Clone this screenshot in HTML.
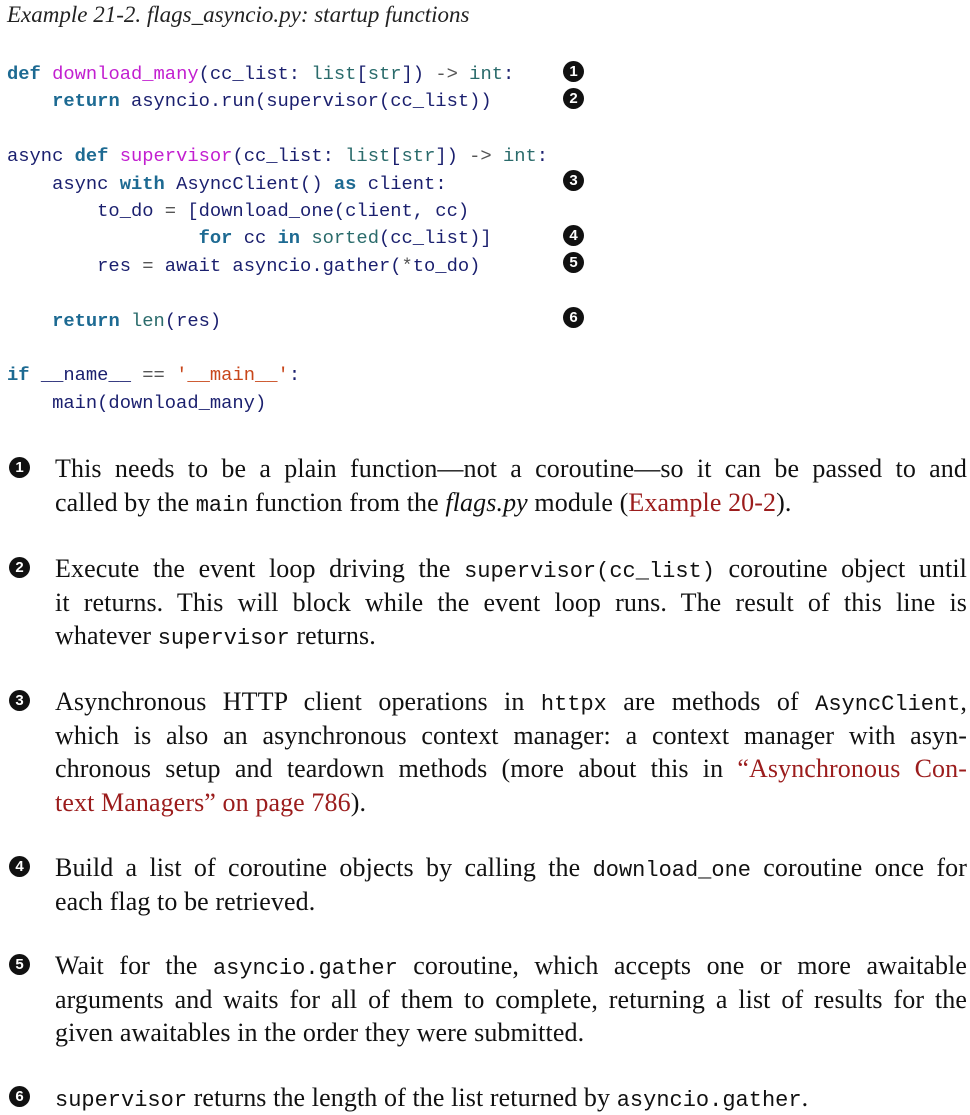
<!DOCTYPE html>
<html><head><meta charset="utf-8"><style>
body{margin:0;background:#fff;width:970px;height:1114px;position:relative;overflow:hidden;color:#111}
.t{position:absolute;left:7px;top:2px;font:italic 23px "Liberation Serif",serif;color:#222}
pre{position:absolute;left:7px;top:61px;margin:0;font:18.8px/27.4px "Liberation Mono",monospace;color:#1a1f6e}
.k{color:#1d6a92;font-weight:bold}.f{color:#c21fd0}.b{color:#2a6b6b}.s{color:#c8461a}.o{color:#555}
.c{display:inline-block;width:21px;height:21px;border-radius:50%;background:#111;color:#fff;font:bold 15px/21px "Liberation Sans",sans-serif;text-align:center;vertical-align:middle}
.cc{position:absolute;left:563px}
.p{position:absolute;left:55px;width:912px;font:26px/33.6px "Liberation Serif",serif;letter-spacing:0.1px;color:#111}
.p div{text-align:justify;text-align-last:justify;height:33.6px}
.p div.l{text-align-last:left}
.p code{font:22px "Liberation Mono",monospace;letter-spacing:0}
.pc{position:absolute;left:9px}
a{color:#9b1c1c;text-decoration:none}
</style></head><body>
<div class="t">Example 21-2. flags_asyncio.py: startup functions</div>
<pre><span class="k">def</span> <span class="f">download_many</span>(cc_list: <span class="b">list</span>[<span class="b">str</span>]) <span class="o">-&gt;</span> <span class="b">int</span>:
    <span class="k">return</span> asyncio.run(supervisor(cc_list))

async <span class="k">def</span> <span class="f">supervisor</span>(cc_list: <span class="b">list</span>[<span class="b">str</span>]) <span class="o">-&gt;</span> <span class="b">int</span>:
    async <span class="k">with</span> AsyncClient() <span class="k">as</span> client:
        to_do <span class="o">=</span> [download_one(client, cc)
                 <span class="k">for</span> cc <span class="k">in</span> <span class="b">sorted</span>(cc_list)]
        res <span class="o">=</span> await asyncio.gather(<span class="o">*</span>to_do)

    <span class="k">return</span> <span class="b">len</span>(res)

<span class="k">if</span> __name__ <span class="o">==</span> <span class="s">'__main__'</span>:
    main(download_many)</pre>
<span class="c cc" style="top:61px">1</span>
<span class="c cc" style="top:88px">2</span>
<span class="c cc" style="top:170px">3</span>
<span class="c cc" style="top:225px">4</span>
<span class="c cc" style="top:252px">5</span>
<span class="c cc" style="top:307px">6</span>

<span class="c pc" style="top:457px">1</span>
<div class="p" style="top:452px"><div>This needs to be a plain function—not a coroutine—so it can be passed to and</div><div class="l">called by the <code>main</code> function from the <i>flags.py</i> module (<a>Example 20-2</a>).</div></div>
<span class="c pc" style="top:557px">2</span>
<div class="p" style="top:552px"><div>Execute the event loop driving the <code>supervisor(cc_list)</code> coroutine object until</div><div>it returns. This will block while the event loop runs. The result of this line is</div><div class="l">whatever <code>supervisor</code> returns.</div></div>
<span class="c pc" style="top:690px">3</span>
<div class="p" style="top:685px"><div>Asynchronous HTTP client operations in <code>httpx</code> are methods of <code>AsyncClient</code>,</div><div>which is also an asynchronous context manager: a context manager with asyn-</div><div>chronous setup and teardown methods (more about this in <a>“Asynchronous Con-</a></div><div class="l"><a>text Managers” on page 786</a>).</div></div>
<span class="c pc" style="top:856px">4</span>
<div class="p" style="top:851px"><div>Build a list of coroutine objects by calling the <code>download_one</code> coroutine once for</div><div class="l">each flag to be retrieved.</div></div>
<span class="c pc" style="top:954px">5</span>
<div class="p" style="top:949px"><div>Wait for the <code>asyncio.gather</code> coroutine, which accepts one or more awaitable</div><div>arguments and waits for all of them to complete, returning a list of results for the</div><div class="l">given awaitables in the order they were submitted.</div></div>
<span class="c pc" style="top:1086px">6</span>
<div class="p" style="top:1081px"><div class="l"><code>supervisor</code> returns the length of the list returned by <code>asyncio.gather</code>.</div></div>
</body></html>
